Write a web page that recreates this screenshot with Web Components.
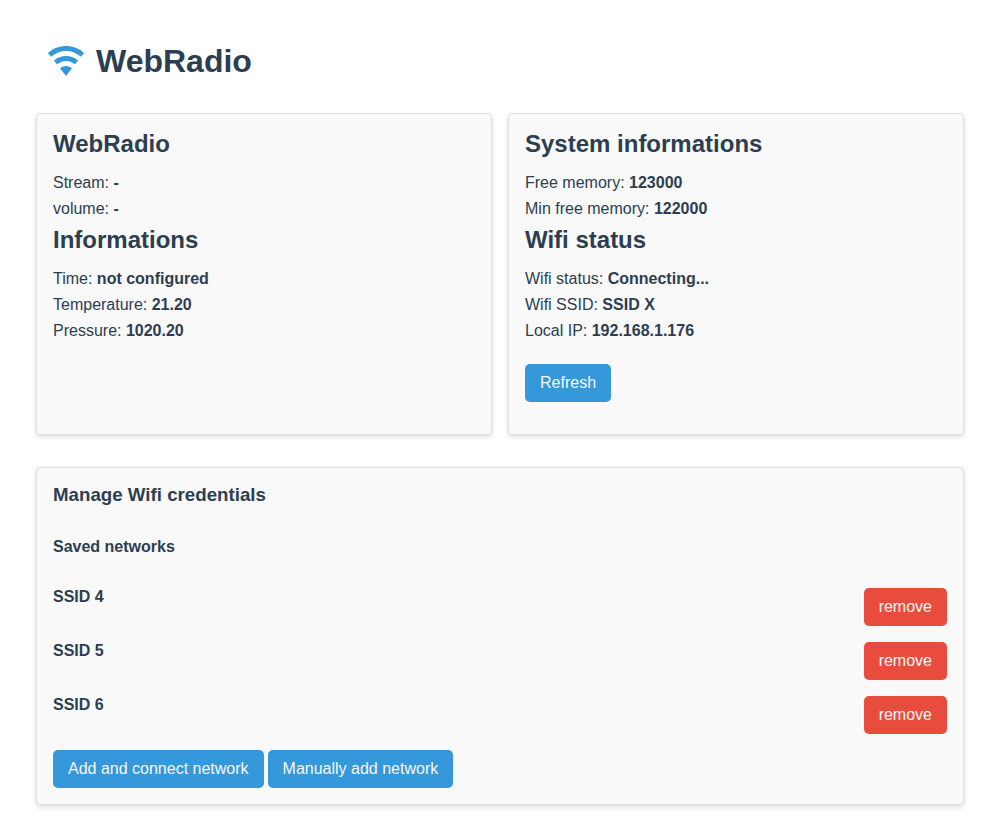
<!DOCTYPE html>
<html lang="en">
<head>
<meta charset="utf-8">
<meta name="viewport" content="width=device-width, initial-scale=1">
<title>WebRadio</title>
<style>
  body {
    margin: 0;
    background: #fff;
    color: #2c3e50;
    font: 16px/26px "Liberation Sans", Arial, sans-serif;
  }
</style>
</head>
<body>
<radio-app></radio-app>

<template id="app-template">
  <style>
    :host { display: block; padding: 36px 36px 16px; }
    main { display: grid; grid-template-columns: 1fr 1fr; gap: 32px 16px; }
    .wide { grid-column: 1 / -1; }
    h2 { margin: 0 0 12px; font-size: 24px; line-height: 28px; }
    info-row + h2 { margin-top: 4px; }
    h3 { margin: 0 0 30px; line-height: 22px; }
    h4 { margin: 0 0 30px; font-size: 16px; line-height: 22px; }
    .refresh { margin: 20px 0 16px; }
    ul { margin: 0 0 16px; padding: 0; list-style: none; display: grid; gap: 16px; }
    .actions { display: flex; flex-wrap: wrap; gap: 4px; }
  </style>
  <app-header>WebRadio</app-header>
  <main>
    <app-card>
      <h2>WebRadio</h2>
      <info-row label="Stream:">-</info-row>
      <info-row label="volume:">-</info-row>
      <h2>Informations</h2>
      <info-row label="Time:">not configured</info-row>
      <info-row label="Temperature:">21.20</info-row>
      <info-row label="Pressure:">1020.20</info-row>
    </app-card>
    <app-card>
      <h2>System informations</h2>
      <info-row label="Free memory:">123000</info-row>
      <info-row label="Min free memory:">122000</info-row>
      <h2>Wifi status</h2>
      <info-row label="Wifi status:">Connecting...</info-row>
      <info-row label="Wifi SSID:">SSID X</info-row>
      <info-row label="Local IP:">192.168.1.176</info-row>
      <app-button class="refresh">Refresh</app-button>
    </app-card>
    <app-card class="wide">
      <h3>Manage Wifi credentials</h3>
      <h4>Saved networks</h4>
      <ul>
        <li><network-item>SSID 4</network-item></li>
        <li><network-item>SSID 5</network-item></li>
        <li><network-item>SSID 6</network-item></li>
      </ul>
      <div class="actions">
        <app-button>Add and connect network</app-button>
        <app-button>Manually add network</app-button>
      </div>
    </app-card>
  </main>
</template>

<template id="header-template">
  <style>
    :host { display: block; margin-bottom: 27px; }
    header { display: flex; align-items: center; gap: 12px; padding-left: 12px; height: 50px; }
    svg { width: 36px; height: 30px; flex: none; }
    h1 { margin: 0; font-size: 32px; line-height: 50px; }
  </style>
  <header>
    <svg viewBox="0 0 36 30" aria-hidden="true">
      <g fill="none" stroke="#3498db" stroke-width="5">
        <path d="M1.500 8.900C11 .3 25 .3 34.500 8.900"/>
        <path d="M7.500 16.500C13.500 11.200 22.500 11.200 28.500 16.500"/>
      </g>
      <path fill="#3498db" d="M12 22.300Q18 17.700 24 22.300L18 30Z"/>
    </svg>
    <h1><slot></slot></h1>
  </header>
</template>

<template id="card-template">
  <style>
    :host {
      display: block;
      padding: 16px;
      border: 1px solid #dbdfdf;
      border-radius: 4px;
      background: #f9f9f9;
      box-shadow: 0 2px 5px rgba(0, 0, 0, .15);
    }
  </style>
  <slot></slot>
</template>

<template id="row-template">
  <style>:host { display: block; }</style>
  <span></span> <b><slot></slot></b>
</template>

<template id="button-template">
  <style>
    :host { display: block; width: fit-content; }
    button {
      display: block;
      padding: 10px 15px;
      border: 0;
      border-radius: 5px;
      background: #3498db;
      color: #f9f9f9;
      font: inherit;
      line-height: 18px;
      cursor: pointer;
    }
    :host([danger]) button { background: #e74c3c; }
  </style>
  <button type="button"><slot></slot></button>
</template>

<template id="network-template">
  <style>
    :host { display: flex; justify-content: space-between; align-items: flex-start; }
    b { line-height: 18px; }
  </style>
  <b><slot></slot></b>
  <app-button danger>remove</app-button>
</template>

<script>
  class TemplateElement extends HTMLElement {
    constructor() {
      super();
      const template = document.getElementById(this.constructor.template);
      this.attachShadow({ mode: "open" }).append(template.content.cloneNode(true));
    }
  }

  class AppButton extends TemplateElement { static template = "button-template"; }
  class AppCard extends TemplateElement { static template = "card-template"; }
  class AppHeader extends TemplateElement { static template = "header-template"; }
  class NetworkItem extends TemplateElement { static template = "network-template"; }
  class RadioApp extends TemplateElement { static template = "app-template"; }
  class InfoRow extends TemplateElement {
    static template = "row-template";
    connectedCallback() {
      this.shadowRoot.querySelector("span").textContent = this.getAttribute("label");
    }
  }

  customElements.define("app-button", AppButton);
  customElements.define("app-card", AppCard);
  customElements.define("app-header", AppHeader);
  customElements.define("info-row", InfoRow);
  customElements.define("network-item", NetworkItem);
  customElements.define("radio-app", RadioApp);
</script>
</body>
</html>
